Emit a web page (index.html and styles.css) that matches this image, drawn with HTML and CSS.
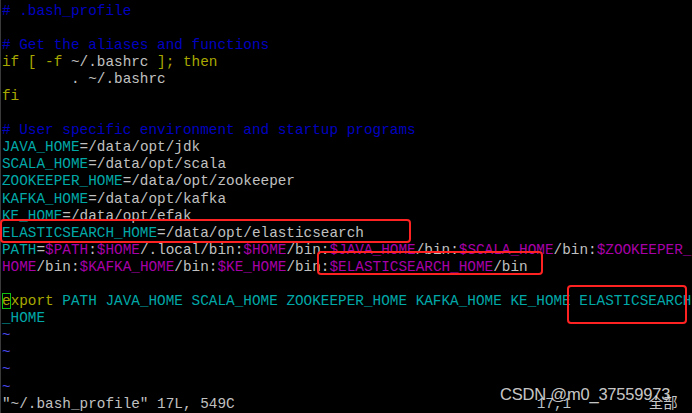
FILE: index.html
```html
<!DOCTYPE html>
<html>
<head>
<meta charset="utf-8">
<link rel="stylesheet" href="styles.css">
</head>
<body>
<div class="screen">
  <div class="term">
    <div class="ln c"># .bash_profile</div>
    <div class="ln"> </div>
    <div class="ln c"># Get the aliases and functions</div>
    <div class="ln"><span class="k">if [ -f </span>~/.bashrc<span class="k"> ]; then</span></div>
    <div class="ln">        . ~/.bashrc</div>
    <div class="ln k">fi</div>
    <div class="ln"> </div>
    <div class="ln c"># User specific environment and startup programs</div>
    <div class="ln"><span class="v">JAVA_HOME</span>=/data/opt/jdk</div>
    <div class="ln"><span class="v">SCALA_HOME</span>=/data/opt/scala</div>
    <div class="ln"><span class="v">ZOOKEEPER_HOME</span>=/data/opt/zookeeper</div>
    <div class="ln"><span class="v">KAFKA_HOME</span>=/data/opt/kafka</div>
    <div class="ln"><span class="v">KE_HOME</span>=/data/opt/efak</div>
    <div class="ln"><span class="v">ELASTICSEARCH_HOME</span>=/data/opt/elasticsearch</div>
    <div class="ln"><span class="v">PATH</span>=<span class="m">$PATH</span>:<span class="m">$HOME</span>/.local/bin:<span class="m">$HOME</span>/bin:<span class="m">$JAVA_HOME</span>/bin:<span class="m">$SCALA_HOME</span>/bin:<span class="m">$ZOOKEEPER_</span></div>
    <div class="ln"><span class="m">HOME</span>/bin:<span class="m">$KAFKA_HOME</span>/bin:<span class="m">$KE_HOME</span>/bin:<span class="m">$ELASTICSEARCH_HOME</span>/bin</div>
    <div class="ln"> </div>
    <div class="ln"><span class="k"><span class="cur">e</span>xport</span><span class="v"> PATH JAVA_HOME SCALA_HOME ZOOKEEPER_HOME KAFKA_HOME KE_HOME ELASTICSEARCH</span></div>
    <div class="ln v">_HOME</div>
    <div class="ln t">~</div>
    <div class="ln t">~</div>
    <div class="ln t">~</div>
    <div class="ln t">~</div>
    <div class="ln status"><span class="msg">"~/.bash_profile" 17L, 549C</span><span class="ruler">17,1</span><span class="all">全部</span></div>
  </div>
  <div class="mark box1"></div>
  <div class="mark box2"></div>
  <div class="mark box3"></div>
  <div class="wm">CSDN @m0_37559973</div>
</div>
</body>
</html>
```
FILE: styles.css
```css
html, body {
  margin: 0;
  padding: 0;
  background: #000;
}
.screen {
  position: relative;
  width: 692px;
  height: 413px;
  overflow: hidden;
  background: #000;
}
.term {
  padding: 2.5px 0 0 1px;
  border-left: 1px solid #3a3a3a;
  font-family: "Liberation Mono", "Noto Sans CJK SC", monospace;
  font-size: 14.375px;
  line-height: 17.1px;
  color: #c0c0c0;
}
.ln {
  height: 17.1px;
  white-space: pre;
}
.c { color: #0000c0; }
.k { color: #a8a800; }
.v { color: #00a8a8; }
.m { color: #a800a8; }
.t { color: #4b4bf0; }
.cur {
  outline: 1.5px solid #10c010;
  outline-offset: -1px;
}
.status {
  display: flex;
}
.msg { width: 534.75px; }
.ruler { width: 112.1px; color: #b8c0c8; }
.all { color: #c8c8c8; }
.mark {
  position: absolute;
  border: 2.5px solid #ff2222;
  border-radius: 4px;
}
.box1 { left: 0; top: 219px; width: 407px; height: 20px; }
.box2 { left: 317px; top: 251px; width: 222px; height: 20px; }
.box3 { left: 567px; top: 285px; width: 116px; height: 35px; }
.wm {
  position: absolute;
  left: 500px;
  top: 385px;
  font-family: "Liberation Sans", Arial, sans-serif;
  font-size: 16.5px;
  color: rgba(225, 225, 225, 0.9);
  letter-spacing: -0.2px;
}
```
